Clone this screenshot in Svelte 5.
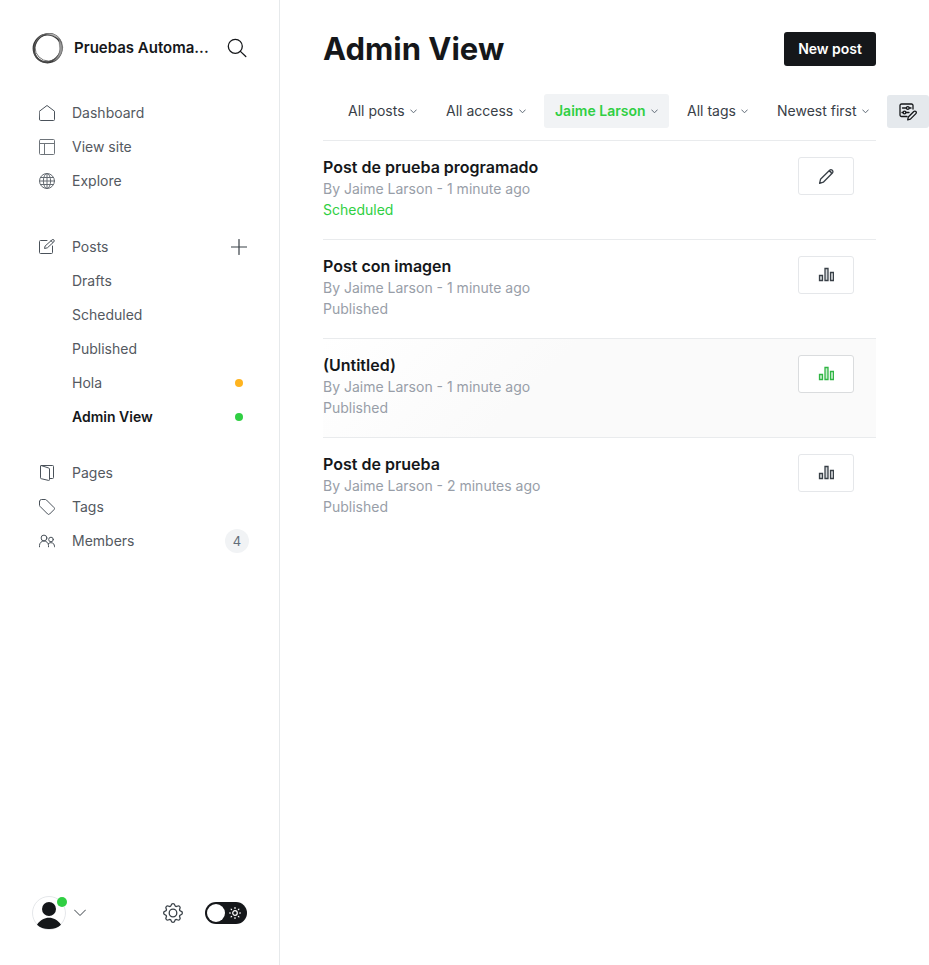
<script>
  const topLinks = [
    { label: 'Dashboard', icon: 'house' },
    { label: 'View site', icon: 'layout' },
    { label: 'Explore', icon: 'globe' },
  ];
  const postViews = [
    { label: 'Drafts' },
    { label: 'Scheduled' },
    { label: 'Published' },
    { label: 'Hola', color: '#ffb41f' },
    { label: 'Admin View', color: '#30cf43', active: true },
  ];
  const contentLinks = [
    { label: 'Pages', icon: 'pages' },
    { label: 'Tags', icon: 'tag' },
    { label: 'Members', icon: 'members', count: 4 },
  ];
  const filters = [
    { name: 'Post type', value: 'All posts' },
    { name: 'Access', value: 'All access' },
    { name: 'Author', value: 'Jaime Larson', active: true },
    { name: 'Tag', value: 'All tags' },
    { name: 'Sort order', value: 'Newest first' },
  ];
  const posts = [
    { title: 'Post de prueba programado', age: '1 minute ago', status: 'Scheduled' },
    { title: 'Post con imagen', age: '1 minute ago', status: 'Published' },
    { title: '(Untitled)', age: '1 minute ago', status: 'Published', hovered: true },
    { title: 'Post de prueba', age: '2 minutes ago', status: 'Published' },
  ];
  let nightShift = $state(false);
</script>

{#snippet icon(name)}
  <svg class="icon" viewBox="0 0 16 16" width="16" height="16" aria-hidden="true">
    {#if name === 'house'}
      <path d="M.5 6.200 8 .5l7.500 5.700v8.300a1 1 0 0 1-1 1h-13a1 1 0 0 1-1-1z" />
    {:else if name === 'layout'}
      <g opacity=".8">
        <rect x=".5" y=".5" width="15" height="15" rx="1" />
        <path d="M.5 4.500h15M5.500 4.500v11" />
      </g>
    {:else if name === 'globe'}
      <g opacity=".85">
        <circle cx="8" cy="8" r="7.500" />
        <ellipse cx="8" cy="8" rx="3.600" ry="7.500" />
        <path d="M8 .5v15M.5 8h15M1.500 4.500h13M1.500 11.500h13" />
      </g>
    {:else if name === 'compose'}
      <path d="M8 1.500H1.500a1 1 0 0 0-1 1v11a1 1 0 0 0 1 1h11a1 1 0 0 0 1-1V7" />
      <path d="m8 8.900-2.500.6.6-2.500L13 .9a1.300 1.300 0 0 1 1.900 1.900zM12 1.700l1.900 1.900" />
    {:else if name === 'pages'}
      <path d="M1.500 1.300v11.500a.9.900 0 0 0 .7.900l7.300 1.700a.8.800 0 0 0 1-.8V4a1 1 0 0 0-.8-1L2.300.6a.7.700 0 0 0-.8.7z" />
      <path d="M2.200.5h11.400a.9.900 0 0 1 .9.900v11.200a.9.900 0 0 1-.9.900h-3" />
    {:else if name === 'tag'}
      <path d="M.5 2.500v3.700a1.500 1.500 0 0 0 .45 1.100l7.700 7.700a1.400 1.400 0 0 0 2 0l4.400-4.400a1.400 1.400 0 0 0 0-2L7.400.95A1.500 1.500 0 0 0 6.300.5H2.500a2 2 0 0 0-2 2z" />
    {:else if name === 'members'}
      <circle cx="5" cy="5" r="2.900" />
      <circle cx="12" cy="6.500" r="2.300" />
      <path d="M.5 13.800v-1.300a4.500 4.500 0 0 1 9 0v1.300M9.300 10.700a3.600 3.600 0 0 1 6.200 2.500v.6" />
    {/if}
  </svg>
{/snippet}

<div class="shell">
  <aside>
    <header class="brand">
      <svg class="logo" viewBox="0 0 32 32" width="32" height="32" aria-hidden="true">
        <circle cx="15.500" cy="16.500" r="14" stroke="#333" stroke-width="1.800" />
        <ellipse cx="15.500" cy="16" rx="13" ry="14.400" transform="rotate(35 15.500 16)" stroke="#555" stroke-width="1.300" />
        <ellipse cx="16.800" cy="15.300" rx="13.800" ry="13.800" stroke="#777" />
        <ellipse cx="16" cy="16" rx="14.800" ry="12.800" transform="rotate(125 16 16)" stroke="#444" />
        <path d="M14 2c7-2 13 2 15 7-4-4-8-6-15-7z" fill="#bbb" stroke="#777" stroke-width=".5" />
        <path d="M27 7c4 5 4.500 12 1 17-2 3-5 5-7 5.500 5.500-4.500 7.500-10 6.500-15.500-.3-3-.3-5-.5-7z" fill="#999" stroke="#666" stroke-width=".5" />
      </svg>
      <strong>Pruebas Automa...</strong>
      <button class="plain" aria-label="Search">
        <svg viewBox="0 0 20 20" width="20" height="20"><circle cx="8.300" cy="8.300" r="7" /><path d="m13.400 13.400 5.400 5.100" /></svg>
      </button>
    </header>

    <nav>
      <ul>
        {#each topLinks as link}
          <li><a href="#top">{@render icon(link.icon)}<span>{link.label}</span></a></li>
        {/each}
      </ul>
      <ul class="posts-group">
        <li>
          <a href="#posts">{@render icon('compose')}<span>Posts</span></a>
          <button class="plain add" aria-label="New post">
            <svg viewBox="0 0 16 16" width="16" height="16"><path d="M8 .5v15M.5 8h15" /></svg>
          </button>
        </li>
        {#each postViews as view}
          <li>
            <a class="sub" class:active={view.active} href="#view"><span>{view.label}</span>
              {#if view.color}<i class="dot" style="background:{view.color}"></i>{/if}
            </a>
          </li>
        {/each}
      </ul>
      <ul class="content-group">
        {#each contentLinks as link}
          <li>
            <a href="#content">{@render icon(link.icon)}<span>{link.label}</span>
              {#if link.count}<span class="count">{link.count}</span>{/if}
            </a>
          </li>
        {/each}
      </ul>
    </nav>

    <footer>
      <button class="plain account" aria-label="Account menu">
        <span class="avatar">
          <svg viewBox="0 0 34 34" width="34" height="34">
            <circle cx="17" cy="17" r="16.500" fill="#fff" stroke="#e5e7ea" />
            <circle cx="17" cy="13" r="7" fill="#15171a" stroke="none" />
            <path d="M5 28.700C8 24 12.500 21.700 17 21.700s9 2.300 12 7A17 17 0 0 1 17 33 17 17 0 0 1 5 28.700z" fill="#15171a" stroke="none" />
          </svg>
          <i class="badge"></i>
        </span>
        <svg class="caret" viewBox="0 0 12 8" width="12" height="8"><path d="m.5 1 5.500 5.500L11.500 1" /></svg>
      </button>
      <a class="settings" href="#settings" aria-label="Settings">
        <svg viewBox="0 0 20 20" width="20" height="20">
          <circle cx="10" cy="10" r="3.800" />
          <path d="M8.200 2.200c.5-2.100 3.100-2.100 3.600 0 .3 1.200 1.300 1.600 2.400 1 1.900-1.100 3.700.7 2.600 2.600-.6 1.100-.2 2.100 1 2.400 2.100.5 2.100 3.100 0 3.600-1.200.3-1.600 1.300-1 2.400 1.100 1.900-.7 3.700-2.600 2.600-1.100-.6-2.100-.2-2.400 1-.5 2.100-3.100 2.100-3.600 0-.3-1.200-1.300-1.600-2.400-1-1.900 1.100-3.700-.7-2.600-2.600.6-1.100.2-2.100-1-2.400-2.100-.5-2.100-3.100 0-3.600 1.200-.3 1.600-1.300 1-2.400C2.100 3.900 3.900 2.100 5.800 3.200c1.100.6 2.100.2 2.400-1z" />
        </svg>
      </a>
      <label class="toggle">
        <input type="checkbox" aria-label="Night shift" bind:checked={nightShift} />
        <svg viewBox="0 0 12 12" width="12" height="12" aria-hidden="true">
          <circle cx="6" cy="6" r="2.300" />
          <path d="M6 .5v1M6 10.500v1M.5 6h1M10.500 6h1M2.100 2.100l.5.5M9.400 9.400l.5.5M2.100 9.900l.5-.5M9.400 2.600l.5-.5" />
        </svg>
      </label>
    </footer>
  </aside>

  <main>
    <header class="heading">
      <h1>Admin View</h1>
      <button class="new-post">New post</button>
    </header>
    <div class="filters">
      {#each filters as filter}
        <label class="filter" class:active={filter.active}>
          <select aria-label={filter.name}><option>{filter.value}</option></select>
          <svg viewBox="0 0 7 5" width="7" height="5" aria-hidden="true"><path d="M.7.900 3.500 3.800 6.300.9" /></svg>
        </label>
      {/each}
      <button class="edit-view" aria-label="Edit view">
        <svg viewBox="0 0 18 18" width="18" height="18">
          <path d="M8 13.500H2.500A1.500 1.500 0 0 1 1 12V2.500A1.500 1.500 0 0 1 2.500 1h10A1.500 1.500 0 0 1 14 2.500V6" />
          <path d="M3.500 5H7M10.500 5H12M3 9.500h1M7 9.500h3" />
          <circle cx="8.800" cy="5" r="1.400" /><circle cx="5.500" cy="9.500" r="1.400" />
          <path d="m8.700 16.800.6-2.800 5.500-5.500a1.450 1.450 0 0 1 2.100 2.100l-5.500 5.500z" fill="#e5e9ed" />
        </svg>
      </button>
    </div>

    <ol class="posts">
      {#each posts as post}
        <li class:hovered={post.hovered}>
          <a class="entry" href="#post">
            <h3>{post.title}</h3>
            <p>By Jaime Larson - {post.age}</p>
            <p class:scheduled={post.status === 'Scheduled'}>{post.status}</p>
          </a>
          <a class="action" href="#open" aria-label={post.status === 'Scheduled' ? 'Edit post' : 'Post analytics'}>
            <svg viewBox="0 0 16 16" width="16" height="16">
              {#if post.status === 'Scheduled'}
                <path d="M1.600 15.400 2.500 11.300 11.600 2.200c1.900-1.600 4.300.9 2.800 2.800l-9.100 9.200zM10.800 3c1.400.2 2.600 1.400 2.800 2.800" />
              {:else}
                <path class="bars" d="M1.500 8.500h3v5h-3zM7 1.500h3v12H7zM12.500 5.500h3v8h-3z" />
              {/if}
            </svg>
          </a>
        </li>
      {/each}
    </ol>
  </main>
</div>

<style>
  :global(body) { margin: 0; background: #fff; }
  .shell {
    display: flex;
    min-height: 100vh;
    overflow-x: hidden;
    font: 14px/20px Inter, "Liberation Sans", sans-serif;
    color: #15171a;
  }
  svg { display: block; flex: none; fill: none; stroke: #394047; stroke-linecap: round; stroke-linejoin: round; }
  a { color: inherit; text-decoration: none; }
  ul, ol { margin: 0; padding: 0; list-style: none; }
  h1, h3, p { margin: 0; }
  button, select { font: inherit; color: inherit; cursor: pointer; }
  .plain { display: flex; align-items: center; padding: 0; border: 0; background: none; }

  aside {
    display: flex;
    flex: none;
    flex-direction: column;
    box-sizing: border-box;
    width: 280px;
    padding: 0 32px;
    border-right: 1px solid #e6e9eb;
  }
  .brand { display: flex; align-items: center; height: 96px; }
  .brand strong {
    flex: 1;
    margin: 0 12px 0 10px;
    overflow: hidden;
    font-size: 15px;
    font-weight: 600;
    white-space: nowrap;
    text-overflow: ellipsis;
  }
  .brand button svg { stroke: #15171a; stroke-width: 1.300; }
  nav { flex: 1; }
  nav li { display: flex; align-items: center; height: 34px; }
  nav a { display: flex; flex: 1; align-items: center; gap: 17px; padding-left: 7px; color: #54595f; }
  nav .sub { padding-left: 40px; }
  nav .active { color: #15171a; font-weight: 600; }
  .posts-group { margin-top: 32px; }
  .content-group { margin-top: 22px; }
  .icon { stroke: #4a525a; }
  .add svg { stroke: #394047; stroke-width: 1.200; }
  .dot { width: 8px; height: 8px; margin: 0 4px 0 auto; border-radius: 50%; }
  .count {
    width: 24px;
    margin: 0 -2px 0 auto;
    border-radius: 12px;
    background: #f1f3f5;
    color: #626d79;
    font-size: 13px;
    line-height: 24px;
    text-align: center;
  }
  footer { display: flex; align-items: center; height: 104px; }
  .account { gap: 8px; margin-right: auto; }
  .avatar { position: relative; }
  .badge { position: absolute; top: 1px; right: -1px; width: 10px; height: 10px; border-radius: 50%; background: #30cf43; }
  .settings { margin-right: 22px; }
  .settings svg { overflow: visible; stroke-width: 1.300; }
  .toggle { position: relative; }
  .toggle input {
    display: flex;
    align-items: center;
    box-sizing: border-box;
    width: 42px;
    height: 22px;
    margin: 0;
    padding: 2px;
    appearance: none;
    border-radius: 11px;
    background: #15171a;
  }
  .toggle input::before { content: ""; width: 18px; height: 18px; border-radius: 50%; background: #fff; }
  .toggle input:checked { justify-content: flex-end; }
  .toggle svg { position: absolute; top: 5px; right: 6px; stroke: #fff; stroke-width: 1.200; }

  main { flex: 1; min-width: 0; padding: 0 53px 0 43px; }
  .heading { display: flex; align-items: center; justify-content: space-between; box-sizing: border-box; height: 94px; padding-top: 3px; }
  h1 { font-size: 31px; font-weight: 700; line-height: 40px; }
  .new-post {
    height: 34px;
    padding: 0 14px;
    border: 0;
    border-radius: 3px;
    background: #15171a;
    color: #fff;
    font-weight: 600;
  }
  .filters { display: flex; align-items: flex-end; justify-content: flex-end; gap: 7px; margin: 0 -53px 12px; }
  .filter { display: flex; align-items: center; gap: 5px; height: 34px; padding: 0 11px; border-radius: 3px; color: #394047; }
  .filter select { padding: 0; appearance: none; border: 0; outline: 0; background: none; }
  .filter.active { background: #f1f3f5; color: #30cf43; font-weight: 600; }
  .filter svg { stroke: #626d79; }
  .edit-view { display: grid; place-items: center; width: 42px; height: 33px; padding: 0; border: 0; border-radius: 3px; background: #e5e9ed; }
  .edit-view svg { stroke: #15171a; stroke-width: 1.300; }

  .posts li { display: flex; align-items: flex-start; padding: 16px 22px 19px 0; border-top: 1px solid #e9ebed; }
  .posts .hovered { background: linear-gradient(315deg, #fafafa 60%, #fff); }
  .entry { flex: 1; line-height: 21px; color: #989ea8; }
  h3 { color: #15171a; font-size: 16px; font-weight: 600; line-height: 21px; }
  .scheduled { color: #30cf43; }
  .action {
    display: grid;
    place-items: center;
    box-sizing: border-box;
    width: 56px;
    height: 38px;
    border: 1px solid #e5e7ea;
    border-radius: 3px;
    background: #fff;
  }
  .action svg { stroke-width: 1.300; }
  .bars { fill: #d5d8db; stroke-linejoin: miter; }
  .hovered .action { border-color: #dadcde; }
  .hovered .action svg { stroke: #30b544; }
  .hovered .bars { fill: #c8efce; }
</style>
